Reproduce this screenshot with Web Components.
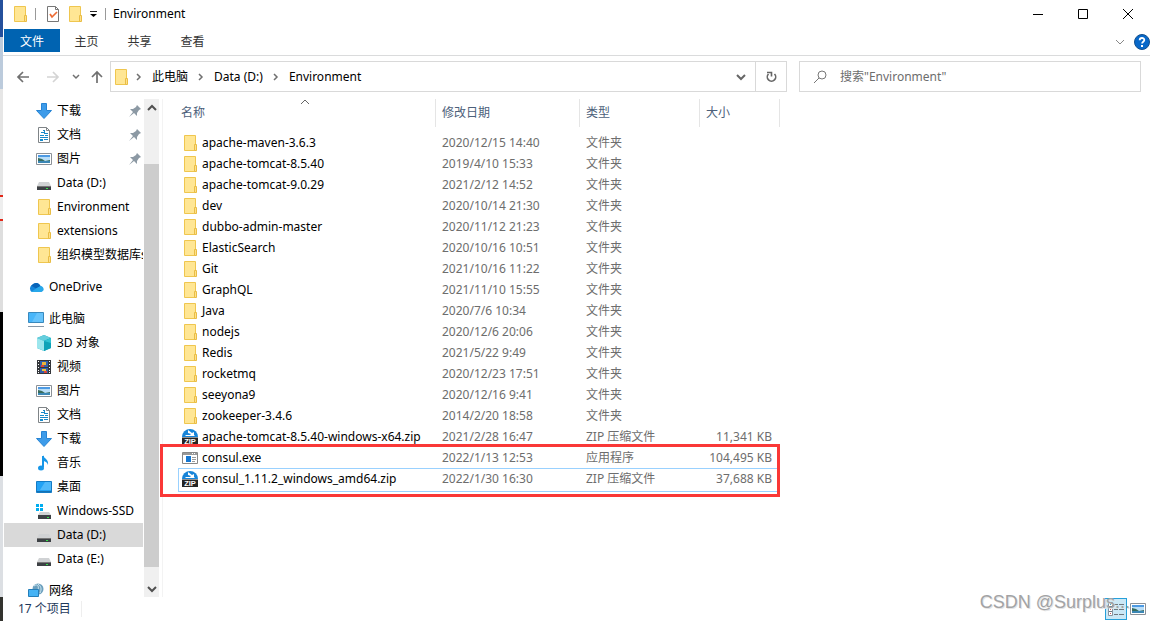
<!DOCTYPE html>
<html lang="zh-CN">
<head>
<meta charset="utf-8">
<title>Environment</title>
<style>
html, body { height: 100%; margin: 0; }
body { font: 12px/16px "Noto Sans", "Noto Sans CJK SC", sans-serif; color: #000; background: #fff; overflow: hidden; }
</style>
</head>
<body>
<explorer-app></explorer-app>
<script>
const folder = '<path d="M2.5.5h11v15h-11z" fill="#ffe694" stroke="#efc64f"/><path d="M12.5 9.5h2v6h-2z" fill="#ffe08a" stroke="#e9bd45"/>';
const disk = '<path d="M3 7h10l2 4H1z" fill="#d0d2d4"/><path d="M1 11h14v4H1z" fill="#3d4145"/><path d="M1 11h14v1H1z" fill="#777"/><path d="M10 13h2v1h-2z" fill="#35e24a"/>';
const icons = {
  folder,
  disk,
  osdisk: '<path d="M0 1h3v3H0zM4 1h3v3H4zM0 5h3v3H0zM4 5h3v3H4z" fill="#00adef"/><path d="M4 9h9l2 3H2z" fill="#d0d2d4"/><path d="M2 12h13v4H2z" fill="#3d4145"/><path d="M11 14h2v1h-2z" fill="#35e24a"/>',
  down: '<path d="M5.500.500h5v7h5L8 15.500.500 7.500h5z" fill="#3d9be9" stroke="#2784d4" stroke-linejoin="round"/>',
  doc: '<path d="M2.500.500h8l3 3v12h-11z" fill="#fff" stroke="#7f8487"/><path d="M10.500.500v3h3" fill="none" stroke="#7f8487"/><path d="M7 3h2v1H7zM5 5h3v1H5zM8 4h1v3H8zM9 6h3v1H9zM4 8h4v1H4zM9 8h3v1H9zM4 10h8v1H4zM4 12h3v2H4zM8 12h4v1H8z" fill="#1689ca"/>',
  picture: '<path d="M.500 2.500h15v11H.500z" fill="#fff" stroke="#8b9197"/><path d="M2 4h12v8H2z" fill="#b9def8"/><path d="M2 4h12v2H2z" fill="#4d9ae3"/><path d="M2 7l4 1 3 2 5-1v1H2z" fill="#386c5c"/><path d="M2 10h12v2H2z" fill="#3b87b5"/>',
  cloud: '<path d="M4 13a4 4 0 0 1 0-7 5 5 0 0 1 8.500 1A3.200 3.200 0 0 1 13 13z" fill="#1485da"/><path d="M4 6a5 5 0 0 1 8.500 1L8 9.500 3 6.500z" fill="#0864b8"/><path d="M3 13l5-3.500L12.500 7a3.200 3.200 0 0 1 2.500 5l-2 1z" fill="#28a8ea"/>',
  pc: '<path d="M.500 1.500h15v10H.500z" fill="#48b6fa" stroke="#3989bd"/><path d="M9 2h6v9H4z" fill="#7bcbfc" opacity=".6"/><path d="M0 15.500h16" stroke="#8798a8"/>',
  cube: '<path d="M8 0l7 3v10l-7 3-7-3V3z" fill="#1ba9bd"/><path d="M8 0l7 3-7 3-7-3z" fill="#66cedd"/><path d="M1 3l7 3v10l-7-3z" fill="#9ce6ed"/><path d="M8 6l7-3v10l-7 3z" fill="#0fa3b8"/><path d="M8 6l7-3v5z" fill="#30c3d3"/>',
  video: '<path d="M1 1h14v14H1z" fill="#34363a"/><path d="M2 2h1v1H2zM2 5h1v1H2zM2 8h1v1H2zM2 11h1v1H2zM13 2h1v1h-1zM13 5h1v1h-1zM13 8h1v1h-1zM13 11h1v1h-1zM2 13h1v1H2zM13 13h1v1h-1z" fill="#fff"/><path d="M4 2h8v6H4zM4 9h8v5H4z" fill="#315ea9"/><path d="M6 3h4v3H6z" fill="#e9b53b"/><path d="M5 6h3v2H5z" fill="#d9443c"/><path d="M6 10h4v2H6z" fill="#e9c13b"/><path d="M8 12h3v2H8z" fill="#d9443c"/>',
  music: '<path d="M7 1v11" stroke="#1696e8" stroke-width="2"/><ellipse cx="5" cy="13" rx="3" ry="2.500" fill="#1696e8"/><path d="M7 0c1 4 6 4 5 10-1-3-3-4-5-4z" fill="#1696e8"/>',
  desktop: '<path d="M.500 2.500h15v11H.500z" fill="#22a2f5" stroke="#147bc5"/><path d="M9 3h6v8H4z" fill="#50b9fa"/><path d="M1 12h14v1H1z" fill="#1571b2"/>',
  network: '<circle cx="10" cy="6" r="5.500" fill="#6b9fbd"/><path d="M6 3c4-3 5 1 4 4M10 1c3 2 4 5 2 9" stroke="#d3eaf3" fill="none"/><path d="M.500 6.500h10v7H.500z" fill="#45b3f5" stroke="#247eb9"/>',
  pin: '<path d="M10 2l4 4-2 1-2 3 0 3-3-3-5 4 4-5-3-3h3l3-2z" fill="#8c99a4"/>',
  exe: '<path d="M.500 2.500h15v11H.500z" fill="#fff" stroke="#888"/><path d="M1 3h14v2H1z" fill="#999"/><path d="M10 3h1v1h-1zM12 3h1v1h-1z" fill="#fff"/><path d="M4 6h5v6H4z" fill="#1678d2"/><path d="M10 7.500h4M10 9.500h4M10 11.500h3" stroke="#999"/>',
  zip: '<path d="M0 8a8 8 0 0 1 16 0z" fill="#1784d8"/><path d="M6 1l4 3 2-1v4H7l2-2-3-1z" fill="#fff"/><path d="M3 7h10l-1-1H4z" fill="#fff"/><path d="M0 8.500h16V16H0z" fill="#252525"/><text x="8" y="15" text-anchor="middle" font-family="Liberation Sans" font-size="7.500" font-weight="700" fill="#fff">ZIP</text>',
  check: '<path d="M2.500.500h8l3 3v12h-11z" fill="#fff" stroke="#777"/><path d="M10.500.500v3h3" fill="none" stroke="#777"/><path d="M5 8l2 3 5-5" fill="none" stroke="#ed6a32" stroke-width="1.700"/>',
  customize: '<path d="M5 5.500h7" stroke="#222"/><path d="M5 8h7l-3.500 3z" fill="#000"/>',
  minimize: '<path d="M3 8.500h10" stroke="#000"/>',
  maximize: '<path d="M3.500 3.500h9v9h-9z" fill="none" stroke="#000"/>',
  close: '<path d="M3 3l10 10M13 3L3 13" stroke="#000"/>',
  chevdown: '<path d="M4 6l4 4 4-4" fill="none" stroke="currentColor" stroke-width="var(--weight,1)"/>',
  chevup: '<path d="M4 10l4-4 4 4" fill="none" stroke="currentColor" stroke-width="var(--weight,1)"/>',
  chevright: '<path d="M6 5l3 3-3 3" fill="none" stroke="#707070" stroke-width="1.500"/>',
  smalldown: '<path d="M5 6l3 3 3-3" fill="none" stroke="#707070" stroke-width="1.500"/>',
  back: '<path d="M14 8H3M8 3L3 8l5 5" fill="none" stroke="#707070" stroke-width="1.700"/>',
  forward: '<path d="M2 8h11M8 3l5 5-5 5" fill="none" stroke="#d4d4d4" stroke-width="1.700"/>',
  up: '<path d="M8 14V3M3 8l5-5 5 5" fill="none" stroke="#707070" stroke-width="1.700"/>',
  refresh: '<path d="M11.500 5a4.200 4.200 0 1 1-6 0" fill="none" stroke="#666" stroke-width="1.600"/><path d="M4 3.500h4.500v4" fill="none" stroke="#666" stroke-width="1.600"/>',
  search: '<circle cx="10" cy="6" r="4" fill="none" stroke="#777"/><path d="M7 9l-5 5" stroke="#777"/>',
  help: '<circle cx="8" cy="8" r="7.500" fill="#0868c9" stroke="#14508e"/><path d="M5.700 6.300C5.700 3.300 10.300 3.300 10.300 6c0 1.700-2.200 1.700-2.200 3.500" stroke="#fff" stroke-width="1.800" fill="none"/><path d="M7 11h2v2H7z" fill="#fff"/>',
  details: '<path d="M.500 1.500h4v13h-4z" fill="#fff" stroke="#8994a0"/><path d="M1 5.500h3M1 10.500h3M6 3.500h4M11 3.500h5M6 8.500h4M11 8.500h5M6 13.500h4M11 13.500h5" stroke="#6f7880"/><path d="M2 3h1v1H2z" fill="#1689ca"/><path d="M2 8h1v1H2zM2 12h1v1H2z" fill="#c55"/>'
};
const reset = `
  :host { box-sizing: border-box; display: block; }
  * { box-sizing: border-box; }
  button { font: inherit; color: inherit; background: none; border: 0; padding: 0; margin: 0; display: flex; align-items: center; justify-content: center; }
  a { color: inherit; text-decoration: none; }`;
function define(name, css, html) {
  customElements.define(name, class extends HTMLElement {
    constructor() {
      super();
      const t = document.createElement('template');
      t.innerHTML = `<style>${reset}${css}</style>${html}`;
      this.attachShadow({ mode: 'open' }).append(t.content.cloneNode(true));
    }
  });
}
customElements.define('ui-icon', class extends HTMLElement {
  connectedCallback() {
    if (this.shadowRoot) return;
    this.attachShadow({ mode: 'open' }).innerHTML = `<style>:host{display:block;flex:none;width:16px;height:16px}svg{display:block;width:100%;height:100%}path{stroke-linecap:butt}</style><svg viewBox="0 0 16 16" aria-hidden="true">${icons[this.getAttribute('name')]}</svg>`;
  }
});
customElements.define('nav-item', class extends HTMLElement {
  connectedCallback() {
    if (this.shadowRoot) return;
    const pin = this.hasAttribute('pinned') ? '<ui-icon name="pin"></ui-icon>' : '';
    this.attachShadow({ mode: 'open' }).innerHTML = `<style>
      :host { display: block; }
      :host([selected]) { background: #d9d9d9; }
      :host([spaced]) { margin-top: 8px; }
      a { display: flex; align-items: center; gap: 5px; height: 24px; padding-left: 32px; color: #000; text-decoration: none; overflow: hidden; white-space: nowrap; }
      :host([root]) a { padding-left: 24px; }
      span { flex: 1; min-width: 0; }
    </style><a href="#"><ui-icon name="${this.getAttribute('icon')}"></ui-icon><span><slot></slot></span>${pin}</a>`;
  }
});
define('title-bar', `
  :host { display: flex; align-items: center; height: 28px; padding-left: 9px; }
  .sep { width: 1px; height: 12px; background: #999; margin: 0 7px; }
  .quick { display: flex; align-items: center; }
  .quick .check { margin-left: 2px; }
  .quick .new { margin-left: 6px; }
  .quick .more { margin-left: 2px; }
  .more + .sep { margin-left: 4px; }
  .controls { display: flex; margin-left: auto; }
  .controls button { width: 45px; height: 27px; }`,
  `<div class="quick"><button aria-label="属性"><ui-icon name="folder"></ui-icon></button><i class="sep"></i><button class="check" aria-label="检查"><ui-icon name="check"></ui-icon></button><button class="new" aria-label="新建文件夹"><ui-icon name="folder"></ui-icon></button><button class="more" aria-label="自定义"><ui-icon name="customize"></ui-icon></button><i class="sep"></i></div><span>Environment</span>
   <div class="controls"><button aria-label="最小化"><ui-icon name="minimize"></ui-icon></button><button aria-label="最大化"><ui-icon name="maximize"></ui-icon></button><button aria-label="关闭"><ui-icon name="close"></ui-icon></button></div>`);
define('ribbon-tabs', `
  :host { display: flex; align-items: flex-end; height: 28px; border-bottom: 1px solid #dadbdc; padding-bottom: 3px; padding-left: 1px; color: #333; }
  button { width: 53px; height: 23px; padding-top: 2px; }
  .file { width: 56px; background: #0063b1; color: #fff; }
  .expand { margin-left: auto; width: 16px; color: #888; }
  .help { width: 16px; margin-left: 6px; }`,
  `<button class="file">文件</button><button>主页</button><button>共享</button><button>查看</button><button class="expand" aria-label="展开功能区"><ui-icon name="chevdown"></ui-icon></button><button class="help" aria-label="帮助"><ui-icon name="help"></ui-icon></button>`);
define('address-bar', `
  :host { display: flex; align-items: center; gap: 12px; padding: 5px 9px 6px 12px; }
  .arrows { display: flex; align-items: center; width: 83px; }
  .arrows .next { margin-left: 14px; }
  .arrows .recent { margin-left: 7px; }
  .arrows .parent { margin-left: 5px; }
  .place { display: flex; flex: 1; min-width: 0; height: 31px; border: 1px solid #d9d9d9; }
  .crumbs { display: flex; flex: 1; align-items: center; padding-left: 2px; white-space: nowrap; }
  .crumbs ui-icon[name=chevright] { margin: 0 5px; }
  .crumbs ui-icon[name=folder] + ui-icon { margin-left: 2px; }
  .drop { width: 28px; color: #666; --weight: 2; }
  .refresh { width: 31px; border-left: 1px solid #d9d9d9; }
  .search { display: flex; align-items: center; width: 342px; height: 31px; border: 1px solid #d9d9d9; padding-left: 12px; gap: 12px; }
  input { font: inherit; flex: 1; min-width: 0; border: 0; outline: 0; padding: 0; background: none; }
  input::placeholder { color: #6d6d6d; opacity: 1; }`,
  `<div class="arrows"><button aria-label="后退"><ui-icon name="back"></ui-icon></button><button class="next" aria-label="前进"><ui-icon name="forward"></ui-icon></button><button class="recent" aria-label="最近"><ui-icon name="smalldown"></ui-icon></button><button class="parent" aria-label="上移"><ui-icon name="up"></ui-icon></button></div>
   <div class="place"><nav class="crumbs"><ui-icon name="folder"></ui-icon><ui-icon name="chevright"></ui-icon><a href="#">此电脑</a><ui-icon name="chevright"></ui-icon><a href="#">Data (D:)</a><ui-icon name="chevright"></ui-icon><a href="#">Environment</a></nav><button class="drop" aria-label="历史"><ui-icon name="chevdown"></ui-icon></button><button class="refresh" aria-label="刷新"><ui-icon name="refresh"></ui-icon></button></div>
   <label class="search"><ui-icon name="search"></ui-icon><input type="text" aria-label="搜索" placeholder='搜索"Environment"'></label>`);
define('side-nav', `
  :host { display: flex; width: 156px; min-height: 0; padding-left: 1px; }
  nav { flex: 1; min-width: 0; }
  .bar { display: flex; flex-direction: column; width: 15px; margin-left: 1px; background: #f0f0f0; color: #505050; --weight: 2; }
  .bar button { height: 17px; }
  .track { flex: 1; padding-top: 48px; padding-bottom: 13px; }
  .thumb { height: 100%; background: #cdcdcd; }`,
  `<nav><nav-item icon="down" pinned>下载</nav-item><nav-item icon="doc" pinned>文档</nav-item><nav-item icon="picture" pinned>图片</nav-item><nav-item icon="disk">Data (D:)</nav-item><nav-item icon="folder">Environment</nav-item><nav-item icon="folder">extensions</nav-item><nav-item icon="folder">组织模型数据库s</nav-item>
   <nav-item icon="cloud" root spaced>OneDrive</nav-item><nav-item icon="pc" root spaced>此电脑</nav-item><nav-item icon="cube">3D 对象</nav-item><nav-item icon="video">视频</nav-item><nav-item icon="picture">图片</nav-item><nav-item icon="doc">文档</nav-item><nav-item icon="down">下载</nav-item><nav-item icon="music">音乐</nav-item><nav-item icon="desktop">桌面</nav-item><nav-item icon="osdisk">Windows-SSD</nav-item><nav-item icon="disk" selected>Data (D:)</nav-item><nav-item icon="disk">Data (E:)</nav-item><nav-item icon="network" root spaced>网络</nav-item></nav>
   <div class="bar"><button aria-label="向上滚动"><ui-icon name="chevup"></ui-icon></button><div class="track"><div class="thumb"></div></div><button aria-label="向下滚动"><ui-icon name="chevdown"></ui-icon></button></div>`);
const D = '文件夹', Z = 'ZIP 压缩文件';
const files = [
  ['apache-maven-3.6.3', '2020/12/15 14:40', D], ['apache-tomcat-8.5.40', '2019/4/10 15:33', D], ['apache-tomcat-9.0.29', '2021/2/12 14:52', D],
  ['dev', '2020/10/14 21:30', D], ['dubbo-admin-master', '2020/11/12 21:23', D], ['ElasticSearch', '2020/10/16 10:51', D], ['Git', '2021/10/16 11:22', D],
  ['GraphQL', '2021/11/10 15:55', D], ['Java', '2020/7/6 10:34', D], ['nodejs', '2020/12/6 20:06', D], ['Redis', '2021/5/22 9:49', D],
  ['rocketmq', '2020/12/23 17:51', D], ['seeyona9', '2020/12/16 9:41', D], ['zookeeper-3.4.6', '2014/2/20 18:58', D],
  ['apache-tomcat-8.5.40-windows-x64.zip', '2021/2/28 16:47', Z, '11,341 KB', 'zip'], ['consul.exe', '2022/1/13 12:53', '应用程序', '104,495 KB', 'exe'],
  ['consul_1.11.2_windows_amd64.zip', '2022/1/30 16:30', Z, '37,688 KB', 'zip']
];
define('file-list', `
  :host { flex: 1; min-width: 0; border-left: 1px solid #f3f3f3; margin-left: 3px; padding-left: 15px; }
  .wrap { position: relative; width: 602px; }
  table { table-layout: fixed; border-collapse: separate; border-spacing: 0; width: 100%; color: #6d6d6d; }
  .n { width: 258px; } .d { width: 144px; } .t { width: 120px; }
  th { height: 28px; padding: 0 0 0 6px; border-right: 1px solid #e5e5e5; font-weight: 400; text-align: left; color: #4c607a; position: relative; }
  th:first-child { padding-left: 3px; }
  th button { height: 28px; }
  .sort { position: absolute; left: 50%; top: -5px; margin-left: -10px; color: #666; }
  thead::after { content: ""; display: block; height: 5px; }
  td { height: 21px; padding: 0 0 0 6px; white-space: nowrap; }
  td:first-child { padding-left: 4px; color: #000; }
  td:last-child { text-align: right; padding-right: 8px; }
  .name { display: flex; align-items: center; gap: 4px; }
  .focus { position: relative; }
  .focus td:first-child::before { content: ""; position: absolute; left: 0; top: 0; width: 598px; height: 22px; border: 1px solid #99d1ff; }
  .marked { position: absolute; left: -18px; right: 0; bottom: -8px; height: 53px; border: 3px solid #fa3837; pointer-events: none; }`,
  `<div class="wrap"><table><colgroup><col class="n"><col class="d"><col class="t"><col></colgroup><thead><tr><th><button>名称</button><ui-icon class="sort" name="chevup"></ui-icon></th><th><button>修改日期</button></th><th><button>类型</button></th><th><button>大小</button></th></tr></thead><tbody>${files.map((f, i) => `<tr class="${i === 16 ? 'focus' : ''}"><td><div class="name"><ui-icon name="${f[4] || 'folder'}"></ui-icon>${f[0]}</div></td><td>${f[1]}</td><td>${f[2]}</td><td>${f[3] || ''}</td></tr>`).join('')}</tbody></table><div class="marked"></div></div>`);
define('status-bar', `
  :host { position: relative; display: flex; align-items: center; height: 24px; padding: 0 4px 0 15px; color: #1e395b; }
  .count { padding-right: 10px; border-right: 1px solid #eee; }
  .views { display: flex; align-items: center; gap: 3px; margin-left: auto; }
  .views button { width: 16px; height: 22px; }
  .views .on { width: 22px; border: 1px solid #26a0da; background: #cbe8f6; }
  .mark { position: absolute; right: 20px; bottom: 8px; font: 18px/22px "Liberation Sans", sans-serif; color: #a2a3a5; text-shadow: 1px 1px #e4e4e4; pointer-events: none; }`,
  `<span class="count">17 个项目</span><div class="views"><button class="on" aria-label="详细信息"><ui-icon name="details"></ui-icon></button><button aria-label="大图标"><ui-icon name="picture"></ui-icon></button></div><span class="mark">CSDN @Surplus...</span>`);
define('explorer-app', `
  :host { display: grid; grid-template-columns: 3px minmax(0, 1fr); height: 100vh; }
  .behind { display: grid; grid-template-rows: 37fr 52fr 106fr 26fr 91fr 164fr 121fr 24fr; overflow: hidden; }
  .behind i:nth-child(1) { background: #24509c; }
  .behind i:nth-child(2) { background: #bccbdc; }
  .behind i:nth-child(3) { background: #e6e6e6; }
  .behind i:nth-child(4) { background: #eee; border: solid #e22718; border-width: 2px 0; }
  .behind i:nth-child(5) { background: #dedede; }
  .behind i:nth-child(6) { background: #000; }
  .behind i:nth-child(7) { background: #dcdfe3; }
  .behind i:nth-child(8) { background: #33332f; }
  .window { display: flex; flex-direction: column; min-height: 0; background: #fff; }
  .body { display: flex; flex: 1; min-height: 0; margin-top: 1px; }`,
  `<div class="behind"><i></i><i></i><i></i><i></i><i></i><i></i><i></i><i></i></div><div class="window"><title-bar></title-bar><ribbon-tabs></ribbon-tabs><address-bar></address-bar><div class="body"><side-nav></side-nav><file-list></file-list></div><status-bar></status-bar></div>`);
</script>
</body>
</html>
